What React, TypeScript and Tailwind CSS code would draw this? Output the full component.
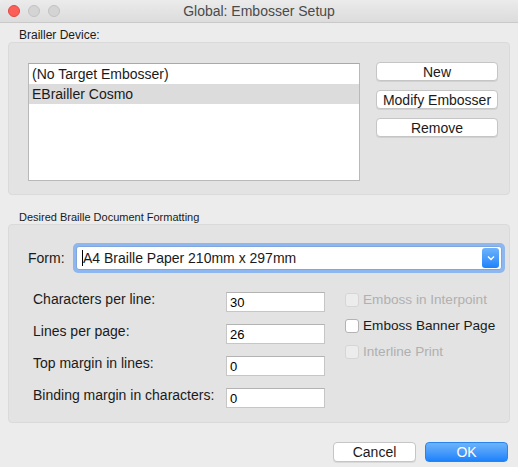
import React, { useState } from "react";

const fields = [
  { label: "Characters per line:", value: "30" },
  { label: "Lines per page:", value: "26" },
  { label: "Top margin in lines:", value: "0" },
  { label: "Binding margin in characters:", value: "0" },
];

const options = [
  { label: "Emboss in Interpoint", disabled: true },
  { label: "Emboss Banner Page", disabled: false },
  { label: "Interline Print", disabled: true },
];

const MacButton: React.FC<{ children: React.ReactNode }> = ({ children }) => (
  <button className="h-[19px] w-[122px] rounded-[4px] border border-[#c5c5c5] bg-white text-[14px] leading-none text-[#1a1a1a] shadow-[0_1px_0_rgba(0,0,0,0.08)]">
    {children}
  </button>
);

const App: React.FC = () => {
  const [selected, setSelected] = useState(1);
  const devices = ["(No Target Embosser)", "EBrailler Cosmo"];

  return (
    <div
      className="w-[518px] h-[467px] overflow-hidden bg-[#ececec] text-[#1a1a1a] flex flex-col"
      style={{ fontFamily: '"Liberation Sans", Arial, sans-serif' }}
    >
      {/* title bar */}
      <div className="relative h-[23px] shrink-0 flex items-center justify-center border-b border-[#c9c9c9] bg-gradient-to-b from-[#ebebeb] to-[#dcdcdc] rounded-t-[5px]">
        <div className="absolute left-[8px] top-[5px] flex gap-[8px]">
          <span className="w-[12px] h-[12px] rounded-full bg-[#fc5f57] border border-[#de4a42]" />
          <span className="w-[12px] h-[12px] rounded-full bg-[#d4d4d4] border border-[#c2c2c2]" />
          <span className="w-[12px] h-[12px] rounded-full bg-[#d4d4d4] border border-[#c2c2c2]" />
        </div>
        <span className="text-[14px] text-[#4a4a4a]">Global: Embosser Setup</span>
      </div>

      <div className="px-[8px] flex flex-col">
        <div className="pl-[11px] pt-[5px] h-[19px] text-[12px] leading-[14px]">Brailler Device:</div>

        {/* device group */}
        <div className="h-[153px] w-[502px] rounded-[4px] bg-[#e3e3e3] border border-[#dadada] pl-[19px] pt-[20px] flex gap-[16px]">
          <div className="w-[332px] h-[118px] bg-white border border-[#b9b9b9] border-t-[#a9a9a9]">
            {devices.map((d, i) => (
              <div
                key={d}
                onClick={() => setSelected(i)}
                className={`h-[20px] pl-[3px] flex items-center text-[14px] ${
                  selected === i ? "bg-[#dcdcdc]" : "bg-white"
                }`}
              >
                {d}
              </div>
            ))}
          </div>
          <div className="flex flex-col gap-[9px] -mt-[1px]">
            <MacButton>New</MacButton>
            <MacButton>Modify Embosser</MacButton>
            <MacButton>Remove</MacButton>
          </div>
        </div>

        <div className="pl-[11px] pt-[16px] h-[29px] text-[11px] leading-[13px]">
          Desired Braille Document Formatting
        </div>

        {/* formatting group */}
        <div className="h-[199px] w-[502px] rounded-[4px] bg-[#e3e3e3] border border-[#dadada] pt-[18px] flex flex-col">
          <div className="flex items-center pl-[19px] h-[30px]">
            <span className="text-[14px] w-[45px]">Form:</span>
            <div className="w-[432px] h-[30px] rounded-[5px] bg-[#8db7ee] p-[3px]">
              <div className="h-full w-full rounded-[3px] bg-white border border-[#7fa6de] flex items-center">
                <span className="w-px h-[16px] bg-black ml-[5px]" />
                <span className="text-[14px] flex-1">A4 Braille Paper 210mm x 297mm</span>
                <div className="h-[20px] w-[17px] mr-[2px] rounded-[3px] bg-gradient-to-b from-[#6cb3fa] to-[#1a82fb] flex items-center justify-center">
                  <svg width="8" height="6" viewBox="0 0 8 6">
                    <path d="M1 1.5 L4 4.5 L7 1.5" fill="none" stroke="white" strokeWidth="1.4" />
                  </svg>
                </div>
              </div>
            </div>
          </div>

          <div className="flex pt-[19px] pl-[24px]">
            <div className="flex flex-col gap-[12px]">
              {fields.map((f) => (
                <div key={f.label} className="flex items-center h-[20px]">
                  <span className="w-[193px] text-[14px] pb-[6px]">{f.label}</span>
                  <input
                    readOnly
                    value={f.value}
                    className="w-[99px] h-[20px] bg-white border border-[#c6c6c6] border-t-[#b3b3b3] px-[3px] text-[13px] text-black outline-none"
                  />
                </div>
              ))}
            </div>
            <div className="flex flex-col gap-[10px] pl-[20px]">
              {options.map((o) => (
                <label key={o.label} className="flex items-center h-[16px] gap-[4px]">
                  <span
                    className={`w-[14px] h-[14px] rounded-[3px] border ${
                      o.disabled ? "bg-[#ececec] border-[#d6d6d6]" : "bg-white border-[#b3b3b3]"
                    }`}
                  />
                  <span className={`text-[13.6px] ${o.disabled ? "text-[#b0b0b0]" : "text-[#1a1a1a]"}`}>
                    {o.label}
                  </span>
                </label>
              ))}
            </div>
          </div>
        </div>

        <div className="flex justify-end gap-[9px] pt-[19px] pr-[2px]">
          <button className="w-[83px] h-[20px] rounded-[4px] border border-[#c5c5c5] bg-white text-[14px] leading-none shadow-[0_1px_0_rgba(0,0,0,0.08)]">
            Cancel
          </button>
          <button className="w-[83px] h-[20px] rounded-[4px] border border-[#2a84f0] bg-gradient-to-b from-[#6cb3fa] to-[#1a82fb] text-white text-[14px] leading-none">
            OK
          </button>
        </div>
      </div>
    </div>
  );
};

export default App;
